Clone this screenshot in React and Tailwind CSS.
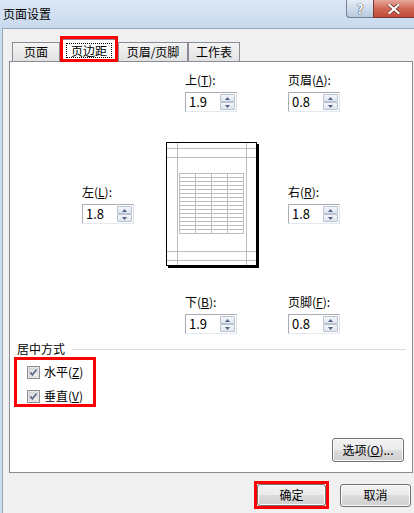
import React from "react";

const Label = ({ pre, k }) => (
  <div className="whitespace-nowrap text-[12px] leading-[16px] text-black">
    {pre}(<span className="underline">{k}</span>):
  </div>
);

const SpinBtn = ({ up }) => (
  <div className="flex h-[8px] items-center justify-center rounded-[1px] border border-[#b9c2d0] bg-gradient-to-b from-[#f5f7fa] to-[#dfe5ee]">
    <svg width="5" height="3" viewBox="0 0 5 3">
      {up ? (
        <path d="M2.5 0 L5 3 L0 3 Z" fill="#4f6186" />
      ) : (
        <path d="M0 0 L5 0 L2.5 3 Z" fill="#4f6186" />
      )}
    </svg>
  </div>
);

const Spin = ({ value }) => (
  <div className="mt-[4px] flex h-[20px] w-[52px] border border-[#abadb3] border-b-[#e3e9ef] border-r-[#dbdfe6] bg-white">
    <div className="flex-1 pl-[3px] text-[13px] leading-[18px] text-black">{value}</div>
    <div className="my-[1px] mr-[1px] flex w-[15px] flex-col">
      <SpinBtn up />
      <SpinBtn />
    </div>
  </div>
);

const Field = ({ pre, k, value }) => (
  <div className="flex w-[52px] flex-col">
    <Label pre={pre} k={k} />
    <Spin value={value} />
  </div>
);

const Preview = () => {
  const rows = [];
  for (let i = 1; i < 15; i++) rows.push(31.5 + i * 4);
  return (
    <svg width="93" height="126" viewBox="0 0 93 126">
      <rect x="2" y="2" width="91" height="124" fill="#000" />
      <rect x="0.5" y="0.5" width="90" height="123" fill="#fff" stroke="#000" />
      <g stroke="#bdbdbd" strokeWidth="1">
        <line x1="11.5" y1="1" x2="11.5" y2="123" />
        <line x1="80.5" y1="1" x2="80.5" y2="123" />
        <line x1="1" y1="6.5" x2="90" y2="6.5" />
        <line x1="1" y1="15.5" x2="90" y2="15.5" />
        <line x1="1" y1="109.5" x2="90" y2="109.5" />
        <line x1="1" y1="118.5" x2="90" y2="118.5" />
        <rect x="13.5" y="31.5" width="64" height="60" fill="none" />
        <line x1="29.5" y1="31.5" x2="29.5" y2="91.5" />
        <line x1="45.5" y1="31.5" x2="45.5" y2="91.5" />
        <line x1="61.5" y1="31.5" x2="61.5" y2="91.5" />
        {rows.map((y) => (
          <line key={y} x1="13.5" y1={y} x2="77.5" y2={y} />
        ))}
      </g>
    </svg>
  );
};

const Check = ({ children }) => (
  <div className="flex h-[16px] items-center gap-[4px]">
    <svg width="13" height="13" viewBox="0 0 13 13">
      <defs>
        <linearGradient id="cb" x1="0" y1="0" x2="1" y2="1">
          <stop offset="0" stopColor="#d8d8d8" />
          <stop offset="1" stopColor="#f6f6f6" />
        </linearGradient>
      </defs>
      <rect x="0.5" y="0.5" width="12" height="12" fill="#f4f4f4" stroke="#8f8f8f" />
      <rect x="2" y="2" width="9" height="9" fill="url(#cb)" stroke="#c4c4c4" strokeWidth="0.6" />
      <path d="M3.3 6.4 L5.4 8.8 L9.6 3.4" fill="none" stroke="#5c6c8c" strokeWidth="1.7" />
    </svg>
    <span className="text-[12px] leading-[16px] text-black">{children}</span>
  </div>
);

const Btn = ({ children, className = "" }) => (
  <div
    className={`flex items-center justify-center rounded-[3px] border border-[#707070] bg-[linear-gradient(to_bottom,#f2f2f2_0%,#ebebeb_50%,#dddddd_50%,#cfcfcf_100%)] text-[12px] leading-[16px] text-black shadow-[inset_0_0_0_1px_#fbfbfb] ${className}`}
  >
    {children}
  </div>
);

const Tab = ({ children, w }) => (
  <div
    className={`flex h-[20px] items-center justify-center border border-[#898c95] bg-gradient-to-b from-[#f4f4f4] to-[#e2e2e2] text-[12px] leading-[16px] text-black ${w}`}
  >
    {children}
  </div>
);

export default function App() {
  return (
    <div className="flex h-[513px] w-[414px] flex-col overflow-hidden bg-[#cbdcee] font-['Noto_Sans_CJK_SC',sans-serif]">
      {/* title bar */}
      <div className="flex h-[28px] items-start justify-between bg-gradient-to-b from-[#dbe7f4] to-[#c8daee]">
        <div className="pl-[3px] pt-[6px] text-[12px] leading-[16px] text-black">页面设置</div>
        <div className="flex">
          <div className="flex h-[18px] w-[27px] items-center justify-center rounded-bl-[4px] border border-t-0 border-r-0 border-[#6f7f96] bg-gradient-to-b from-[#e6edf6] via-[#cfdbea] to-[#b8c9de]">
            <span className="text-[13px] font-bold leading-[14px] text-white [text-shadow:0_0_1px_#333,0_0_1px_#333]">?</span>
          </div>
          <div className="flex h-[18px] w-[41px] items-center justify-center border border-t-0 border-r-0 border-[#7a3a32] bg-gradient-to-b from-[#e7a79c] via-[#d06857] to-[#c24a38]">
            <svg width="12" height="10" viewBox="0 0 12 10">
              <path d="M1.5 1 L10.5 9 M10.5 1 L1.5 9" stroke="#5a1a12" strokeWidth="3.4" strokeLinecap="square" />
              <path d="M1.5 1 L10.5 9 M10.5 1 L1.5 9" stroke="#fff" strokeWidth="2.2" strokeLinecap="square" />
            </svg>
          </div>
        </div>
      </div>

      {/* body */}
      <div className="ml-[2px] flex flex-1 flex-col border-l border-t border-[#97a6b8] bg-[#f0f0f0] pt-[10px]">
        {/* tabs */}
        <div className="relative z-10 ml-[9px] flex h-[23px] items-end">
          <Tab w="w-[48px]">页面</Tab>
          <div className="relative flex h-[23px] w-[58px] justify-center border border-b-0 border-[#898c95] bg-white pt-[3px]">
            <div className="h-[15px] border border-dotted border-black px-[4px] text-[12px] leading-[13px] text-black">
              页边距
            </div>
            <div className="absolute -left-[1px] -right-[1px] -top-[4px] bottom-0 border-[3px] border-[#ff0000]" />
          </div>
          <Tab w="w-[70px]">页眉/页脚</Tab>
          <Tab w="w-[52px]">工作表</Tab>
        </div>

        {/* panel */}
        <div className="-mt-[1px] ml-[6px] flex h-[412px] w-[404px] flex-col border border-[#898c95] bg-white">
          <div className="ml-[175px] mt-[10px] flex gap-[51px]">
            <Field pre="上" k="T" value="1.9" />
            <Field pre="页眉" k="A" value="0.8" />
          </div>

          <div className="ml-[72px] mt-[30px] flex items-start">
            <div className="mt-[42px]">
              <Field pre="左" k="L" value="1.8" />
            </div>
            <div className="ml-[32px]">
              <Preview />
            </div>
            <div className="ml-[29px] mt-[42px]">
              <Field pre="右" k="R" value="1.8" />
            </div>
          </div>

          <div className="ml-[175px] mt-[26px] flex gap-[51px]">
            <Field pre="下" k="B" value="1.9" />
            <Field pre="页脚" k="F" value="0.8" />
          </div>

          <div className="ml-[7px] mr-[6px] mt-[7px] flex items-center gap-[7px]">
            <span className="text-[12px] leading-[16px] text-black">居中方式</span>
            <div className="h-px flex-1 bg-[#d5dfe5]" />
          </div>

          <div className="ml-[4px] flex h-[50px] w-[82px] flex-col gap-[8px] border-[3px] border-[#ff0000] pl-[10px] pt-[4px]">
            <Check>
              水平(<span className="underline">Z</span>)
            </Check>
            <Check>
              垂直(<span className="underline">V</span>)
            </Check>
          </div>

          <div className="flex-1" />
          <div className="flex justify-end pb-[10px] pr-[8px]">
            <Btn className="h-[24px] w-[72px]">
              选项(<span className="underline">O</span>)...
            </Btn>
          </div>
        </div>

        {/* bottom buttons */}
        <div className="mt-[8px] flex items-center justify-end gap-[11px] pr-[3px]">
          <div className="h-[28px] w-[75px] border-[3px] border-[#ff0000]">
            <Btn className="h-full w-full border-[#3c7fb1] shadow-[inset_0_0_0_1px_#9fe0f5]">确定</Btn>
          </div>
          <Btn className="h-[23px] w-[71px]">取消</Btn>
        </div>
      </div>
    </div>
  );
}
